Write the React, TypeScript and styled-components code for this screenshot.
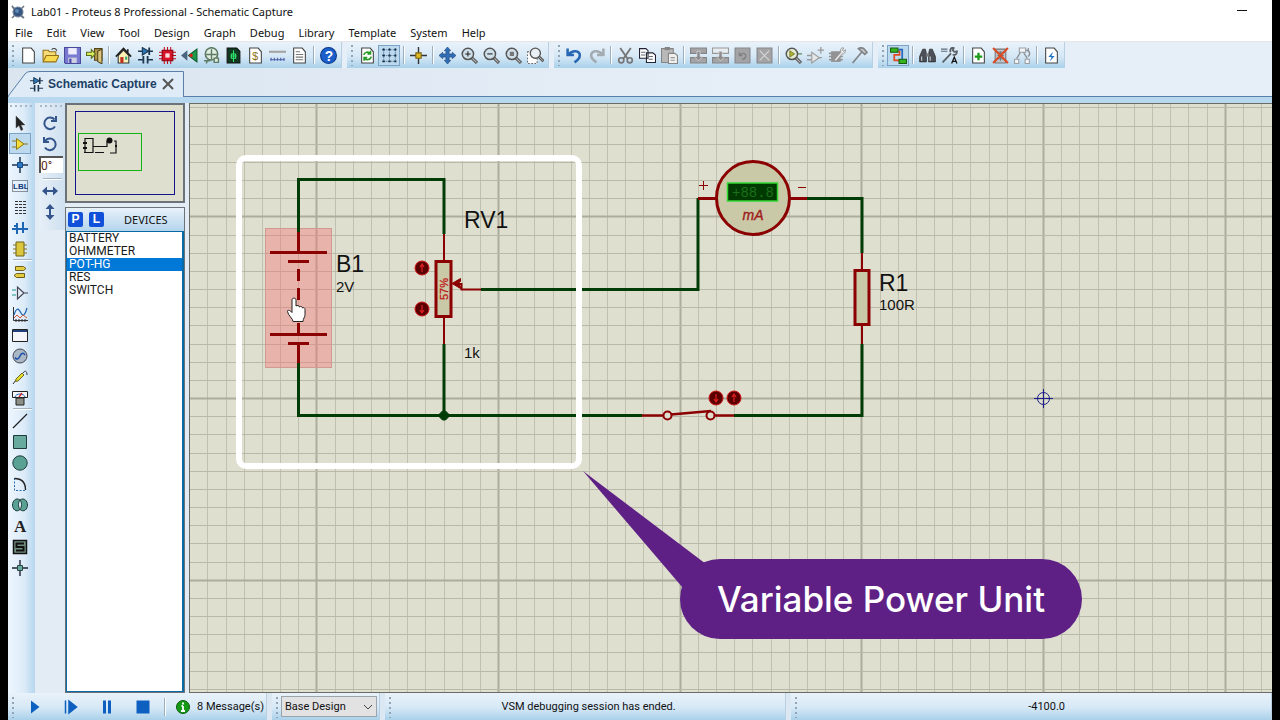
import React from "react";
import styled, { createGlobalStyle, css } from "styled-components";

const ui = `"Noto Sans", "Open Sans", sans-serif`;
const arial = `"Liberation Sans", Arial, sans-serif`;

const GlobalStyle = createGlobalStyle`
  * { box-sizing: border-box; }
  body { margin: 0; background: #000; color: #111; font-family: ${ui}; font-size: 11px; }
  button, input, select { font: inherit; color: inherit; margin: 0; }
`;

/* ---------- frame ---------- */

const Window = styled.main`
  display: flex;
  flex-direction: column;
  height: 100vh;
  min-height: 640px;
  margin: 0 8px;
  background: #e3ecf5;
  overflow: hidden;
`;

const TitleBar = styled.header`
  display: flex;
  align-items: center;
  gap: 5px;
  height: 24px;
  padding: 0 24px 0 2px;
  background: #fff;
`;

const Title = styled.h1`
  flex: 1;
  margin: 0;
  font: 400 11px/16px ${ui};
  white-space: nowrap;
`;

const Minimize = styled.button`
  display: flex;
  width: 12px;
  height: 16px;
  padding: 0;
  border: 0;
  background: none;
`;

const MenuBar = styled.nav`
  display: flex;
  gap: 14px;
  height: 17px;
  padding-left: 7px;
  background: #fff;
`;

const MenuItem = styled.button`
  padding: 0;
  border: 0;
  background: none;
  font: 400 11px/17px ${ui};
  white-space: nowrap;
`;

const barFill = "linear-gradient(#e9f2fa, #d6e8f6 55%, #a9d1ea)";

const ToolbarRow = styled.div`
  display: flex;
  gap: 5px;
  height: 27px;
  border-top: 1px solid #e4e6e9;
  background: #e6eff8;
`;

const ToolGroup = styled.div`
  display: flex;
  align-items: center;
  height: 26px;
  padding-right: 2px;
  border-right: 1px solid #b9d0e2;
  background: ${barFill};
`;

const Grip = styled.span<{ $across?: boolean }>`
  flex: none;
  ${(p) =>
    p.$across
      ? css`
          height: 4px;
          background: radial-gradient(circle at 2px 2px, #a9b8c6 1px, transparent 1px) 0 0 / 5px 4px repeat-x;
        `
      : css`
          width: 9px;
          height: 22px;
          background: radial-gradient(circle at 2px 2px, #93a5b5 1px, transparent 1px) 3px 0 / 5px 5px repeat-y;
        `}
`;

const IconButton = styled.button<{ $on?: boolean }>`
  display: flex;
  flex: none;
  align-items: center;
  justify-content: center;
  width: 22px;
  height: 21px;
  padding: 0;
  border: 1px solid ${(p) => (p.$on ? "#7aa3c6" : "transparent")};
  background: ${(p) => (p.$on ? "#bcd9ee" : "none")};
`;

const Divider = styled.i`
  flex: none;
  width: 7px;
  height: 18px;
  background: linear-gradient(90deg, transparent 3px, #9aaebd 3px, #9aaebd 4px, #fff 4px, #fff 5px, transparent 5px);
`;

const RowDivider = styled.i`
  flex: none;
  height: 2px;
  margin: 0 1px 0 4px;
  border-top: 1px solid #a3b3c2;
  border-bottom: 1px solid #fff;
`;

/* ---------- tab ---------- */

const TabStrip = styled.div`
  display: flex;
  height: 35px;
  padding-top: 3px;
  border-bottom: 6px solid #b7d8ee;
  background: linear-gradient(90deg, #dbe5ef, #e6eff8 60%);
`;

const Tab = styled.div`
  position: relative;
  z-index: 0;
  display: flex;
  align-items: center;
  gap: 4px;
  width: 176px;
  height: 26px;
  padding-left: 21px;
`;

const TabShape = styled.svg`
  position: absolute;
  inset: 0;
  z-index: -1;
`;

const TabLabel = styled.span`
  width: 107px;
  font: 700 12px/18px ${arial};
  color: #1d3f66;
  white-space: nowrap;
`;

const TabClose = styled.button`
  display: flex;
  margin-left: 2px;
  padding: 0;
  border: 0;
  background: none;
`;

const TabRule = styled.i`
  flex: 1;
  height: 26px;
  border-bottom: 1px solid #5a7fa8;
`;

/* ---------- workspace ---------- */

const Workspace = styled.div`
  display: flex;
  flex: 1;
  min-height: 0;
`;

const SideBar = styled.div<{ $rotate?: boolean }>`
  display: flex;
  flex: none;
  flex-direction: column;
  width: 27px;
  padding: 1px 2px 8px 1px;
  background: linear-gradient(90deg, #edf6fe, #dcebf8 60%, #b6d6ee);
  ${(p) =>
    p.$rotate &&
    css`
      align-self: flex-start;
      width: 26px;
      margin-left: 4px;
      padding-left: 0;
      background: linear-gradient(90deg, #e6eff8, #cfe0ef);
    `}
`;

const SideTop = styled.div`
  height: 8px;
`;

const Angle = styled.input`
  width: 24px;
  height: 17px;
  margin: 2px 0 5px;
  padding: 0;
  border: 0;
  border-top: 2px solid #555;
  border-left: 2px solid #555;
  background: #fff;
  font: 400 12px/14px Roboto, sans-serif;
  color: #5a2c20;
`;

const Panels = styled.aside`
  display: flex;
  flex: none;
  flex-direction: column;
  gap: 4px;
  width: 120px;
`;

const Preview = styled.div`
  height: 100px;
  border: 2px solid #6c7278;
  background: #dfdfd0;
`;

const Devices = styled.section`
  display: flex;
  flex: 1;
  flex-direction: column;
  border: 1px solid #6c7278;
`;

const DevicesHead = styled.header`
  display: flex;
  align-items: center;
  gap: 6px;
  height: 23px;
  padding-left: 2px;
  background: linear-gradient(#e8f1fa, #b4d5ec);
`;

const LetterButton = styled.button`
  width: 15px;
  height: 15px;
  padding: 0;
  border: 0;
  border-radius: 2px;
  background: #1150d8;
  color: #fff;
  font: 700 12px/15px ${arial};
`;

const DevicesTitle = styled.h2`
  flex: 1;
  margin: 0;
  padding-left: 14px;
  font: 400 11px/16px ${ui};
`;

const DeviceList = styled.ul`
  flex: 1;
  margin: 0;
  padding: 0;
  border: 1px solid #0a6aa6;
  border-right-width: 2px;
  background: #fff;
  list-style: none;
`;

const Device = styled.li<{ $on?: boolean }>`
  height: 13px;
  padding-left: 2px;
  font: 400 12px/13px Roboto, sans-serif;
  background: ${(p) => (p.$on ? "#0078d7" : "none")};
  color: ${(p) => (p.$on ? "#fff" : "#1a1a1a")};
`;

const Sheet = styled.section`
  position: relative;
  flex: 1;
  margin-left: 4px;
  border: solid #6b6b66;
  border-width: 1px 0 1px 1px;
  background: #dfdfd0;
  overflow: hidden;
`;

const Drawing = styled.svg`
  position: absolute;
  inset: 0;
  width: 100%;
  height: 100%;
`;

const Highlight = styled.div`
  position: absolute;
  left: 46px;
  top: 51px;
  width: 346px;
  height: 314px;
  border: 6px solid #fff;
  border-radius: 10px;
`;

const CalloutTail = styled.svg`
  position: absolute;
  left: 392px;
  top: 366px;
`;

const Callout = styled.div`
  position: absolute;
  left: 490px;
  top: 455px;
  width: 402px;
  height: 80px;
  border-radius: 40px;
  background: #5f2086;
  color: #fff;
  font: 500 35px/80px Inter, sans-serif;
  text-align: center;
  white-space: nowrap;
`;

/* ---------- status bar ---------- */

const StatusBar = styled.footer`
  display: flex;
  gap: 5px;
  height: 27px;
  background: #dbe8f3;
`;

const StatusGroup = styled.div<{ $grow?: number }>`
  display: flex;
  align-items: center;
  flex: ${(p) => (p.$grow ? `${p.$grow} 1 0` : "none")};
  padding-right: 2px;
  border-right: 1px solid #b9d0e2;
  background: ${barFill};
`;

const SimButton = styled.button`
  display: flex;
  justify-content: center;
  width: 36px;
  padding: 0;
  border: 0;
  background: none;
`;

const StatusText = styled.output<{ $inset?: boolean }>`
  flex: 1;
  padding-left: ${(p) => (p.$inset ? "24px" : "0")};
  font: 400 11px/16px Roboto, sans-serif;
  text-align: center;
  white-space: nowrap;
`;

const Messages = styled.button`
  display: flex;
  align-items: center;
  gap: 6px;
  padding: 0 0 0 7px;
  border: 0;
  background: none;
  font: 400 11px/16px Roboto, sans-serif;
  white-space: nowrap;
`;

const SelectBox = styled.label`
  position: relative;
  display: flex;
  svg { position: absolute; right: 4px; top: 8px; pointer-events: none; }
`;

const Select = styled.select`
  width: 96px;
  height: 21px;
  padding: 0 3px;
  border: 1px solid #9aa4ad;
  border-radius: 0;
  background: #e2e2e2;
  appearance: none;
  font: 400 11px/16px Roboto, sans-serif;
`;

/* ---------- icons ---------- */

const page = <path d="M2.500 1h8l3 3.500v10.500h-11z" fill="#fff" stroke="#444" />;
const lens = (fill = "#cfe0ea") => (
  <>
    <path d="M10 10l5 5" stroke="#555" strokeWidth="3" />
    <path d="M10.500 10.500l4 4" stroke="#bbb" />
    <circle cx="6.500" cy="6.500" r="5.300" fill={fill} stroke="#555" strokeWidth="1.400" />
  </>
);

const glyphs: Record<string, React.ReactNode> = {
  logo: (
    <>
      <path d="M2 2l12 12M14 2L2 14M2 2l2 3M14 14l-3-2" stroke="#6c7684" strokeWidth="1.600" />
      <circle cx="8" cy="8" r="5" fill="#36557f" stroke="#738398" />
      <circle cx="7" cy="7" r="2" fill="#5d88b9" />
    </>
  ),
  new: page,
  open: (
    <>
      <path d="M1 13V3h5l1 1.500h6v3.500" fill="#f6dd78" stroke="#927018" />
      <path d="M1 14L4 8h12l-3 6z" fill="#f9d94e" stroke="#927018" />
      <path d="M9 2.500c2-2 4-1 5 1" fill="none" stroke="#444" />
    </>
  ),
  save: (
    <>
      <path d="M.5.500h15v15h-14l-1-1z" fill="#7a7ad0" stroke="#4a4a9a" />
      <path d="M4 1h8v6H4z" fill="#eef" />
      <path d="M4 10h8v5H4z" fill="#d0d0e4" />
      <path d="M5 11h2v4H5z" fill="#44a" />
    </>
  ),
  exit: (
    <>
      <path d="M8 1.500h7v11H8z" fill="#b49a4a" stroke="#54451c" />
      <path d="M11 4l4-2v14l-4-2.500z" fill="#dcc67e" stroke="#54451c" />
      <path d="M.5 5h4.500V2.500L9 6.500l-4 4V8H.5z" fill="#d9ec58" stroke="#5a6b20" />
    </>
  ),
  home: (
    <>
      <path d="M3 8v7h10V8L8 3z" fill="#fdf2b4" stroke="#333" />
      <path d="M.8 9L8 1.500l7.200 7.500M12 2v3" fill="none" stroke="#222" strokeWidth="1.600" />
      <path d="M5 9.500h3V15H5z" fill="#c03020" />
      <path d="M9.500 9h2v3h-2z" fill="#3a7" />
    </>
  ),
  parts: (
    <>
      <path d="M1 4h14M1 12h4.500M10.500 12H15" stroke="#1c3650" strokeWidth="1.300" />
      <path d="M5 .5v7L11 4z" fill="#2c76b8" stroke="#1c3650" />
      <path d="M11.500.5v7M6 8.500v7M10 8.500v7" stroke="#1c3650" strokeWidth="1.700" />
    </>
  ),
  chip: (
    <>
      <path d="M5 0v16M8 0v16M11 0v16M0 5h16M0 8h16M0 11h16" stroke="#c0101c" />
      <path d="M3 3h10v10H3z" fill="#d8142a" stroke="#8b0010" />
      <path d="M6 6h4v4H6z" fill="#ffe0e0" />
    </>
  ),
  view3d: (
    <>
      <path d="M15 2v12L7 8z" fill="#1d9a4a" stroke="#0d5d2a" />
      <path d="M6 3v10L0 8z" fill="#4a6480" />
      <circle cx="9.500" cy="8" r="1.700" fill="#d22" />
    </>
  ),
  gerber: (
    <>
      <circle cx="8" cy="6.500" r="5.800" fill="#e2eee2" stroke="#5c7a62" strokeWidth="1.500" />
      <path d="M3 7h10M8 2v10M3 15.500l2-4M1 13h6" stroke="#5c7a62" fill="none" strokeWidth="1.300" />
      <path d="M10.500 10.500h4v4h-4z" fill="#e2eee2" stroke="#5c7a62" strokeWidth="1.300" />
    </>
  ),
  explorer: (
    <>
      <path d="M2 1h9l3 3v11H2z" fill="#113820" stroke="#111" />
      <path d="M8 3v11M5 8.500h6M6 6.500h4v4H6z" stroke="#2ee66c" fill="none" />
    </>
  ),
  bill: (
    <>
      {page}
      <text x="5" y="12" fontSize="10" fontFamily={arial} fill="#8a7010">$</text>
    </>
  ),
  ruler: (
    <>
      <path d="M0 4.500h16" stroke="#a4a4a4" strokeWidth="2" />
      <path d="M1 12h14M2 10v3M5 10v3M8 10v3M11 10v3M14 10v3" stroke="#4a5fa8" />
    </>
  ),
  notes: (
    <>
      {page}
      <path d="M4.500 4.500h4M4.500 7h7M4.500 9.500h7M4.500 12h7" stroke="#777" />
    </>
  ),
  help: (
    <>
      <circle cx="8" cy="8" r="7.500" fill="#1c5fcb" stroke="#0c3a8a" />
      <text x="4.500" y="13" fontSize="13" fontWeight="700" fontFamily={arial} fill="#fff">?</text>
    </>
  ),
  refresh: (
    <>
      {page}
      <path d="M4.500 7.500C5 4.500 9 4 10.500 6M11.500 9c-.5 3-5 4-6.500 1.500M10.800 3.500v3H8M4.800 13v-3h3" fill="none" stroke="#259a25" strokeWidth="1.500" />
    </>
  ),
  grid: (
    <>
      <path d="M1 2.500h14M1 8h14M1 13.500h14M2.500 1v14M8 1v14M13.500 1v14" stroke="#4d7696" strokeDasharray="1 1" />
      <path d="M1.500 2.500h2M7 2.500h2M12.500 2.500h2M1.500 8h2M7 8h2M12.500 8h2M1.500 13.500h2M7 13.500h2M12.500 13.500h2" stroke="#142c44" strokeWidth="1.800" />
    </>
  ),
  origin: (
    <>
      <path d="M8 0v16M0 8h16" stroke="#333" strokeWidth="1.300" />
      <path d="M5.500 5.500h5v5h-5z" fill="#e0b820" stroke="#7a6210" />
    </>
  ),
  pan: <path d="M8 0l3 3.500H9.500v3h3V5L16 8l-3.500 3V9.500h-3v3H11L8 16l-3-3.500h1.500v-3h-3V11L0 8l3.500-3v1.500h3v-3H5z" fill="#2f6db5" stroke="#1d467c" strokeWidth=".6" />,
  zoomIn: (
    <>
      {lens()}
      <path d="M4 6.500h5M6.500 4v5" stroke="#222" />
    </>
  ),
  zoomOut: (
    <>
      {lens()}
      <path d="M4 6.500h5" stroke="#222" />
    </>
  ),
  zoomAll: (
    <>
      {lens()}
      <path d="M4.500 4.500h4v4h-4z" fill="#777" />
    </>
  ),
  zoomArea: (
    <>
      <path d="M.5 4.500h9v11h-9z" fill="#fff" stroke="#666" strokeDasharray="1.500 1.500" />
      <g transform="translate(2 0) scale(.9)">{lens("#e8f0f4")}</g>
    </>
  ),
  undo: <path d="M1.500 1.500v6h6M2.500 7C6 2.500 13 3 13 8c0 3-2 4.500-5 6.500" fill="none" stroke="#2768b4" strokeWidth="2.400" />,
  redo: <path d="M14.500 1.500v6h-6M13.500 7C10 2.500 3 3 3 8c0 3 2 4.500 5 6.500" fill="none" stroke="#a3abb2" strokeWidth="2.400" />,
  cut: (
    <>
      <path d="M3 1l7 10M13 1L6 11" stroke="#777" strokeWidth="1.800" />
      <circle cx="4" cy="12.500" r="2.400" fill="none" stroke="#777" strokeWidth="1.600" />
      <circle cx="12" cy="12.500" r="2.400" fill="none" stroke="#777" strokeWidth="1.600" />
    </>
  ),
  copy: (
    <>
      <path d="M.5 1.500h6l2 2v7h-8zM7 5.500h6l2.500 2v7H7z" fill="#fff" stroke="#223" />
      <path d="M2 5h4M2 7.500h4M9 9h4M9 11.500h4" stroke="#667" />
    </>
  ),
  paste: (
    <>
      <path d="M.5 1.500h11v13H.500z" fill="#b9b9b9" stroke="#858585" />
      <path d="M3.500 0h5v3h-5z" fill="#858585" />
      <path d="M7 6h6l2.500 2v7.500H7z" fill="#eee" stroke="#858585" />
      <path d="M9 10h4M9 12.500h4" stroke="#999" />
    </>
  ),
  blockCopy: (
    <>
      <path d="M.5 1h15v5H.500zM.5 10h15v5H.500z" fill="#a4a4a6" stroke="#858588" />
      <path d="M6.500 4h3v5H12l-4 4-4-4h2.500z" fill="#8b8b8e" stroke="#e8e8e8" strokeWidth=".6" />
    </>
  ),
  blockMove: (
    <>
      <path d="M.5 1h15v5H.500z" fill="#e8edf1" stroke="#999" />
      <path d="M.5 10h15v5H.500z" fill="#a4a4a6" stroke="#858588" />
      <path d="M6.500 4h3v5H12l-4 4-4-4h2.500z" fill="#8b8b8e" stroke="#e8e8e8" strokeWidth=".6" />
    </>
  ),
  blockRotate: (
    <>
      <path d="M1 1h14v14H1z" fill="#a4a4a6" stroke="#858588" />
      <path d="M5 5v3h3M5.500 8c1-3 6-2.500 5.500 1-.3 2-2 2.500-3.500 2.500" fill="none" stroke="#808083" strokeWidth="1.200" />
    </>
  ),
  blockDelete: (
    <>
      <path d="M1 1h14v14H1z" fill="#a4a4a6" stroke="#858588" />
      <path d="M3.500 3.500l9 9M12.500 3.500l-9 9" stroke="#d8d8d8" />
    </>
  ),
  pick: (
    <>
      {lens("#e4ecd0")}
      <path d="M4.500 3.500v6l4.500-3z" fill="#b4b428" stroke="#55551c" strokeWidth=".6" />
      <path d="M12 6.500h4" stroke="#4a7a4a" />
    </>
  ),
  make: (
    <>
      <path d="M4.500 5v10l7-5z" fill="#e6e6e6" stroke="#999" />
      <path d="M0 8h4M0 12h4M11 10h3M10 3h6M13 0v6" stroke="#999" strokeWidth="1.200" />
    </>
  ),
  packaging: (
    <>
      <path d="M2 4h9v10H2z" fill="#929294" />
      <path d="M0 6h13M0 9h13M0 12h13" stroke="#929294" strokeWidth="1.500" />
      <path d="M5 12l6-7c-1-3 1-5 3-4l-1.500 2L14 4l1.500-1.500C16 5 14 7 12.500 6.500l-6 7z" fill="#e5e5e5" stroke="#888" strokeWidth=".7" />
    </>
  ),
  decompose: <path d="M1.500 15L10 5M7 1.500l6 5.500 2-2-3-3.500c-2-1-3.500-1-5 0z" fill="#c9c9c9" stroke="#808488" strokeWidth="1.600" />,
  autoroute: (
    <>
      <path d="M7 4h2v3.500H4v5h5" fill="none" stroke="#e04a20" strokeWidth="1.600" />
      <path d="M8 2.500h3.500V12H9" fill="none" stroke="#2468c0" strokeWidth="1.600" />
      <path d="M.5 1h7v4h-7zM8.500 11.500h7v4h-7z" fill="#35b41f" stroke="#175c10" />
    </>
  ),
  find: (
    <>
      <path d="M3.500 2h2.500l1 4v8H.500V9zM12.500 2H10L9 6v8h6.500V9z" fill="#4b4f58" stroke="#222" strokeWidth=".6" />
      <path d="M6.500 6h3v3h-3z" fill="#777" />
      <path d="M2.500 9v4M10.500 9v4" stroke="#cfd4da" />
    </>
  ),
  props: (
    <>
      <path d="M0 2h6M0 4h6" stroke="#5c6c7c" />
      <path d="M1.500 14.500L9.500 6M9 5c-1-3 1-5 3-4l-1 2 1.500 1.500L15 4c0 3-2 4-4 3" fill="none" stroke="#5a6268" strokeWidth="1.700" />
      <path d="M10 15.500l2.500-6 2.500 6M11 13.500h3" fill="none" stroke="#111" strokeWidth="1.200" />
    </>
  ),
  addSheet: (
    <>
      {page}
      <path d="M8 5.500v7M4.500 9h7" stroke="#1c9a18" strokeWidth="2.200" />
    </>
  ),
  removeSheet: (
    <>
      <path d="M3 2h10v13H3z" fill="#bcc4cc" stroke="#777" />
      <path d="M5 5h6M5 8h6M5 11h6M8 4v9" stroke="#777" />
      <path d="M1 1l14 14M15 1L1 15" stroke="#dc4a22" strokeWidth="1.900" />
    </>
  ),
  exitSheet: (
    <>
      <path d="M5 1h6v4H5zM.5 11.500h4v4h-4zM10.500 11.500h4v4h-4z" fill="#f2f4f6" stroke="#9aa0a6" />
      <path d="M6 5l-3.500 6M9 5l3.500 6M11 3c4 0 5 4 2 6M13.500 1v4" stroke="#8a9096" strokeWidth="1.200" />
    </>
  ),
  erc: (
    <>
      {page}
      <path d="M9.500 4.500L5 9.500h3l-1.500 4L11 8.500H8z" fill="#1f74c8" />
    </>
  ),

  select: <path d="M4 1v12l3-2.500 2 5 2-1-2-4.500h4z" fill="#222" stroke="#555" strokeWidth=".5" />,
  component: (
    <>
      <path d="M0 5h5M0 11h5M11 8h5" stroke="#8a7a18" strokeWidth="1.200" />
      <path d="M4.500 2.500v11L12 8z" fill="#f4da3c" stroke="#8a7a18" />
    </>
  ),
  junction: (
    <>
      <path d="M8 0v16M0 8h16" stroke="#1c3650" strokeWidth="1.500" />
      <path d="M5.500 5.500h5v5h-5z" fill="#2a78c4" stroke="#164a80" />
    </>
  ),
  label: (
    <>
      <path d="M.5 2.500h15v11H.5z" fill="none" stroke="#334" strokeDasharray="1 1" />
      <text x="1" y="11" fontSize="8" fontWeight="700" fontFamily={arial} fill="#123a7a">LBL</text>
    </>
  ),
  script: <path d="M3 2.500h11M3 5.500h11M3 8.500h11M3 11.500h11M3 14.500h11" stroke="#333" strokeDasharray="3 1" />,
  bus: <path d="M0 9h16M5 3v11M11 2v11M2 6h3" stroke="#1c66b4" strokeWidth="2" fill="none" />,
  subcircuit: (
    <>
      <path d="M1 4h14M1 8h14M1 12h14" stroke="#8a7a18" />
      <path d="M4 1h8v14H4z" fill="#dcc63c" stroke="#6c601c" />
    </>
  ),
  terminal: <path d="M3.500 2.500h8l2.500 2-2.500 2h-8zM12.500 9.500h-8l-2.500 2 2.500 2h8z" fill="#e4cc40" stroke="#6c601c" />,
  pin: (
    <>
      <path d="M0 5h4M0 10h4" stroke="#1a9a8a" />
      <path d="M5.500 2v12L12 8zM12 8h4" fill="#e3ecf3" stroke="#445" strokeWidth="1.200" />
    </>
  ),
  graph: (
    <>
      <path d="M1.500 1v13.500H16M4 13v3M7 13v3M10 13v3M13 13v3" stroke="#333" fill="none" />
      <path d="M2 9c3-9 5-6 7-2s4 2 6-5" stroke="#1c66b4" strokeWidth="1.200" fill="none" />
      <path d="M2 12l3-3 3 3 3-3 4 3" stroke="#d85a3a" fill="none" />
    </>
  ),
  popup: (
    <>
      <path d="M.5 2.500h15v12H.5z" fill="#f4f6fa" stroke="#222" />
      <path d="M1 3h14v2H1z" fill="#23407c" />
    </>
  ),
  generator: (
    <>
      <circle cx="8" cy="8" r="7" fill="#a9b8c4" stroke="#445" />
      <path d="M3 9.500c2 3 4 1 5-1.500s3-4 5-1" stroke="#1c4fae" strokeWidth="1.500" fill="none" />
    </>
  ),
  probe: (
    <>
      <path d="M1 15l3-4M11 4c2-3 4-2 4 2" stroke="#333" fill="none" />
      <path d="M3.500 12.500L4 10l6-6 2 2-6 6z" fill="#e6dc30" stroke="#6c6a1c" />
    </>
  ),
  instrument: (
    <>
      <path d="M.5 1.500h15v6H.5z" fill="#f5f5f5" stroke="#222" />
      <path d="M3 7c1-4 9-4 10 0" stroke="#1c66b4" fill="none" />
      <path d="M7 7l3-4" stroke="#d22" strokeWidth="1.300" />
      <path d="M4 8h8v7H4z" fill="#8b8f88" stroke="#222" />
    </>
  ),
  line: <path d="M1 15L15 1" stroke="#222" strokeWidth="1.300" />,
  box: <path d="M1.500 1.500h13v13h-13z" fill="#68ab9e" stroke="#1e3d3a" />,
  circle: <circle cx="8" cy="8" r="7.200" fill="#59a193" stroke="#1e3d3a" />,
  arc: (
    <>
      <path d="M2.500 2v12.500H14" fill="none" stroke="#2a6cae" strokeDasharray="2 1.500" />
      <path d="M2.500 2.500c6 0 11 3 11 11.500" fill="none" stroke="#222" strokeWidth="1.400" />
    </>
  ),
  path: <path d="M8 3C4 0 .5 4 .5 8S4 16 8 12.500C12 16 15.500 12 15.500 8S12 0 8 3c2 2 2 7 0 9.500C6 10 6 5 8 3z" fill="#59a193" stroke="#1e3d3a" />,
  text: <text x="2" y="14" fontSize="17" fontWeight="700" fontFamily="Liberation Serif, serif" fill="#222">A</text>,
  symbol: (
    <>
      <path d="M1.500 1.500h13v13h-13z" fill="#6f8f80" stroke="#111" strokeWidth="1.500" />
      <path d="M12 4.500H4.500V8h7v3.500H4" fill="none" stroke="#111" strokeWidth="2" />
    </>
  ),
  marker: (
    <>
      <path d="M8 0v16M0 8h16" stroke="#223" strokeWidth="1.400" />
      <path d="M5.500 5.500h5v5h-5z" fill="#68ab9e" stroke="#2a4a48" />
    </>
  ),
  cw: <path d="M12.500 4.500A5.800 5.800 0 1 0 13 11.500M14 1v5H9" fill="none" stroke="#34558c" strokeWidth="2" />,
  ccw: <path d="M3.500 4.500A5.800 5.800 0 1 1 3 11.500M2 1v5h5" fill="none" stroke="#34558c" strokeWidth="2" />,
  mirrorX: <path d="M0 8l5-4.500V7h6V3.500L16 8l-5 4.500V9H5v3.500z" fill="#34558c" />,
  mirrorY: <path d="M8 0l4.500 5H9v6h3.500L8 16l-4.500-5H7V5H3.500z" fill="#34558c" />,
  play: <path d="M4 1.500v13l8.500-6.500z" fill="#0d5fc0" />,
  step: <path d="M2.500 1.500v13M6 2v12l7.500-6z" fill="#0d5fc0" stroke="#0d5fc0" strokeWidth="1.500" />,
  pause: <path d="M4 1.500h3v13H4zM9 1.500h3v13H9z" fill="#0d5fc0" />,
  stop: <path d="M1.500 1.500h13v13h-13z" fill="#0d5fc0" />,
  info: (
    <>
      <circle cx="8" cy="8" r="6.500" fill="#159a15" stroke="#0c5c0c" />
      <path d="M8 3.500v2M8 7v5M6 12h4M6.500 7H8" stroke="#fff" strokeWidth="1.800" />
    </>
  ),
};

const Icon = ({ name, size = 16 }: { name: string; size?: number }) => (
  <svg width={size} height={size} viewBox="0 0 16 16" fill="none" aria-hidden="true">
    {glyphs[name]}
  </svg>
);

const toolbars = [
  "new open save exit | home parts chip view3d gerber explorer bill ruler notes | help",
  "refresh grid* | origin | pan zoomIn zoomOut zoomAll zoomArea",
  "undo redo | cut copy paste | blockCopy blockMove blockRotate blockDelete | pick make packaging decompose",
  "autoroute* | find props | addSheet removeSheet exitSheet | erc",
];

const modes =
  "select component* junction label script bus subcircuit | terminal pin graph popup generator probe instrument | line box circle arc path text symbol marker";

const Buttons = ({ list, rows }: { list: string; rows?: boolean }) => (
  <>
    {list.split(" ").map((item, i) => {
      if (item === "|") return rows ? <RowDivider key={i} /> : <Divider key={i} />;
      const name = item.replace("*", "");
      return (
        <IconButton key={i} $on={item.endsWith("*")} aria-label={name} type="button">
          <Icon name={name} size={rows ? 16 : 17} />
        </IconButton>
      );
    })}
  </>
);

/* ---------- schematic ---------- */

const STEP = 109 / 6;
const gridLines = (origin: number, from: number, to: number) =>
  Array.from({ length: to - from }, (_, k) => ({
    at: Math.round(origin + (from + k) * STEP),
    major: (from + k) % 10 === 0,
  }));

const columns = gridLines(1043, -47, 60);
const rowsOfGrid = gridLines(398, -17, 50);

const Actuator = ({ x, y, up }: { x: number; y: number; up?: boolean }) => (
  <g transform={`translate(${x} ${y})`}>
    <circle r="7" fill="#5a0000" stroke="#d01414" />
    <path d={up ? "M0 4V-4M-2 -1L0 -4L2 -1" : "M0 -4V4M-2 1L0 4L2 1"} stroke="#e02020" strokeWidth="1.200" fill="none" />
  </g>
);

const Schematic = () => (
  <Drawing role="img" aria-label="Circuit schematic">
    {/* Shapes use window coordinates; the sheet starts at 190, 104. */}
    <g transform="translate(-190 -104)" fill="none" fontFamily={arial}>
      <g>
        {columns.map((l) => (
          <path key={l.at} d={`M${l.at}.5 100V1400`} stroke={l.major ? "#acad9c" : "#bfc0af"} strokeWidth={l.major ? 2 : 1} />
        ))}
        {rowsOfGrid.map((l) => (
          <path key={l.at} d={`M180 ${l.at}.5H2200`} stroke={l.major ? "#acad9c" : "#b8b9a8"} strokeWidth={l.major ? 2 : 1} />
        ))}
      </g>
      <rect x="265.500" y="228.500" width="66" height="139" fill="#f27878" fillOpacity=".42" stroke="#d09a92" />

      <g stroke="#003c06" strokeWidth="3">
        <path d="M298.500 232V179.500H444V234M298.500 363V415.500H642M444 344V415.500M481 289.500H698V198M807 198.500H862V253M862 344V415.500H734" />
        <path d="M439 414.500l3.500-3.500h3l3.500 3.500v2l-3.500 3.500h-3l-3.500-3.500z" fill="#003c06" strokeWidth="1" />
      </g>

      <g stroke="#8b0000" strokeWidth="3">
        <path d="M298.500 232V252M270 252.500h57M288 261.500h21M298.500 269v12M298.500 288v12M298.500 306v12M298.500 323v11M270 334.500h57M288 343.500h21M298.500 344v19" />
        <path d="M444 234v27M444 317v27M862 253v17M862 325v19" strokeWidth="2" />
        <rect x="436" y="261.500" width="15" height="55" fill="#c9c9a8" />
        <path d="M481 289.500H461.500V284h-4" strokeWidth="2" />
        <path d="M452 283.500l8.500-5v3l-3 2 3 3v2z" fill="#8b0000" strokeWidth="1" />
        <path d="M698 198.500h19M790 198.500h17" />
        <circle cx="753" cy="198" r="36.500" fill="#c9c9a8" />
        <rect x="855" y="270.500" width="14" height="54" fill="#c9c9a8" />
        <path d="M642 415.500h21M715 415.500h19M671 414.500L711 411" strokeWidth="2.400" />
        <circle cx="667.500" cy="415.500" r="4" fill="#dfdfd0" strokeWidth="2" />
        <circle cx="710.500" cy="415.500" r="4" fill="#dfdfd0" strokeWidth="2" />
        <path d="M699 185.500h9M703.500 181v9M798 187.500h8" strokeWidth="1" />
      </g>

      <rect x="727.500" y="183" width="50" height="18" fill="#003a00" stroke="#30d830" strokeWidth="1.500" />
      <text x="753" y="197" fontSize="14" textAnchor="middle" fill="#1b701b" fontFamily="Liberation Mono, monospace">+88.8</text>
      <text x="753" y="220" fontSize="14" fontStyle="italic" textAnchor="middle" fill="#a01c1c" stroke="#a01c1c" strokeWidth=".4">mA</text>
      <text transform="translate(448 289) rotate(-90)" fontSize="11" textAnchor="middle" fill="#c01414" stroke="#c01414" strokeWidth=".3">57%</text>

      <Actuator x={422} y={268} up />
      <Actuator x={422} y={309} />
      <Actuator x={716} y={398} />
      <Actuator x={734} y={398} up />

      <g fill="#111">
        <text x="464" y="228" fontSize="23">RV1</text>
        <text x="464" y="358" fontSize="15">1k</text>
        <text x="336" y="272" fontSize="23">B1</text>
        <text x="336" y="292" fontSize="15">2V</text>
        <text x="879" y="291" fontSize="23">R1</text>
        <text x="879" y="310" fontSize="15">100R</text>
      </g>

      <g stroke="#1c1c8a">
        <circle cx="1043.500" cy="398.500" r="6" />
        <path d="M1034 398.500h19M1043.500 389v19" />
      </g>

      <path
        d="M292 300c0-2.500 4-2.500 4 0v6c1-1 3.500-.5 3.500 1 1-1 3-.5 3 1 1-1 2.500 0 2.500 1.500v5c0 3-2 4-2 7h-10c0-3-5-6-5.500-10-.3-2 2.500-1.500 4.500 1z"
        fill="#fff"
        stroke="#222"
      />
    </g>
  </Drawing>
);

const MiniMap = () => (
  <svg width="116" height="96" viewBox="0 0 116 96" fill="none" role="img" aria-label="Sheet overview">
    <rect x="8.500" y="6.500" width="99" height="83" stroke="#14148a" />
    <rect x="11.500" y="28.500" width="63" height="37" stroke="#14b414" />
    <path d="M18 47.500V33.500h8v14h-9M26 41.500h14V36M40 34.500h3M47 36h2v12h-6M28 47.500h9" stroke="#111" strokeWidth="1.200" />
    <path d="M16 38h4M16 43h4M48 41h2" stroke="#111" strokeWidth="2" />
    <circle cx="42.500" cy="35.500" r="3" fill="#111" />
  </svg>
);

const menus = ["File", "Edit", "View", "Tool", "Design", "Graph", "Debug", "Library", "Template", "System", "Help"];
const devices = ["BATTERY", "OHMMETER", "POT-HG", "RES", "SWITCH"];

export default function App() {
  return (
    <Window>
      <GlobalStyle />
      <TitleBar>
        <Icon name="logo" />
        <Title>Lab01 - Proteus 8 Professional - Schematic Capture</Title>
        <Minimize type="button" aria-label="Minimize">
          <svg width="12" height="16" aria-hidden="true">
            <path d="M1 6.500h10" stroke="#111" />
          </svg>
        </Minimize>
      </TitleBar>

      <MenuBar>
        {menus.map((m) => (
          <MenuItem key={m} type="button">{m}</MenuItem>
        ))}
      </MenuBar>

      <ToolbarRow>
        {toolbars.map((list) => (
          <ToolGroup key={list} role="toolbar">
            <Grip />
            <Buttons list={list} />
          </ToolGroup>
        ))}
      </ToolbarRow>

      <TabStrip>
        <Tab>
          <TabShape width="176" height="26" aria-hidden="true">
            <path d="M0 26L1 24 17 3Q19 .5 22 .5H175.500V26" fill="#dfecf8" stroke="#5a7fa8" />
          </TabShape>
          <Icon name="parts" size={15} />
          <TabLabel>Schematic Capture</TabLabel>
          <TabClose type="button" aria-label="Close tab">
            <svg width="14" height="14" aria-hidden="true">
              <path d="M2 2l10 10M12 2L2 12" stroke="#555" strokeWidth="2" />
            </svg>
          </TabClose>
        </Tab>
        <TabRule />
      </TabStrip>

      <Workspace>
        <SideBar>
          <SideTop>
            <Grip as="div" $across />
          </SideTop>
          <Buttons list={modes} rows />
        </SideBar>
        <SideBar $rotate>
          <SideTop>
            <Grip as="div" $across />
          </SideTop>
          <Buttons list="cw ccw" rows />
          <Angle aria-label="Rotation angle" defaultValue="0°" />
          <RowDivider />
          <Buttons list="mirrorX mirrorY" rows />
        </SideBar>

        <Panels>
          <Preview>
            <MiniMap />
          </Preview>
          <Devices>
            <DevicesHead>
              <LetterButton type="button">P</LetterButton>
              <LetterButton type="button">L</LetterButton>
              <DevicesTitle>DEVICES</DevicesTitle>
            </DevicesHead>
            <DeviceList>
              {devices.map((d) => (
                <Device key={d} $on={d === "POT-HG"}>{d}</Device>
              ))}
            </DeviceList>
          </Devices>
        </Panels>

        <Sheet>
          <Schematic />
          <Highlight />
          <CalloutTail width="124" height="118" aria-hidden="true">
            <path d="M1 1L124 94 101 118z" fill="#5f2086" />
          </CalloutTail>
          <Callout>Variable Power Unit</Callout>
        </Sheet>
      </Workspace>

      <StatusBar>
        <StatusGroup>
          <Grip />
          <SimButton type="button" aria-label="Run"><Icon name="play" /></SimButton>
          <SimButton type="button" aria-label="Step"><Icon name="step" /></SimButton>
          <SimButton type="button" aria-label="Pause"><Icon name="pause" /></SimButton>
          <SimButton type="button" aria-label="Stop"><Icon name="stop" /></SimButton>
          <Divider />
          <Messages type="button">
            <Icon name="info" />
            8 Message(s)
          </Messages>
        </StatusGroup>
        <StatusGroup>
          <Grip />
          <SelectBox>
            <Select aria-label="Variant" defaultValue="Base Design">
              <option>Base Design</option>
            </Select>
            <svg width="10" height="6" aria-hidden="true">
              <path d="M1 1l4 4 4-4" fill="none" stroke="#444" />
            </svg>
          </SelectBox>
        </StatusGroup>
        <StatusGroup $grow={5}>
          <Grip />
          <StatusText>VSM debugging session has ended.</StatusText>
        </StatusGroup>
        <StatusGroup $grow={6}>
          <Grip />
          <StatusText $inset>-4100.0</StatusText>
        </StatusGroup>
      </StatusBar>
    </Window>
  );
}
